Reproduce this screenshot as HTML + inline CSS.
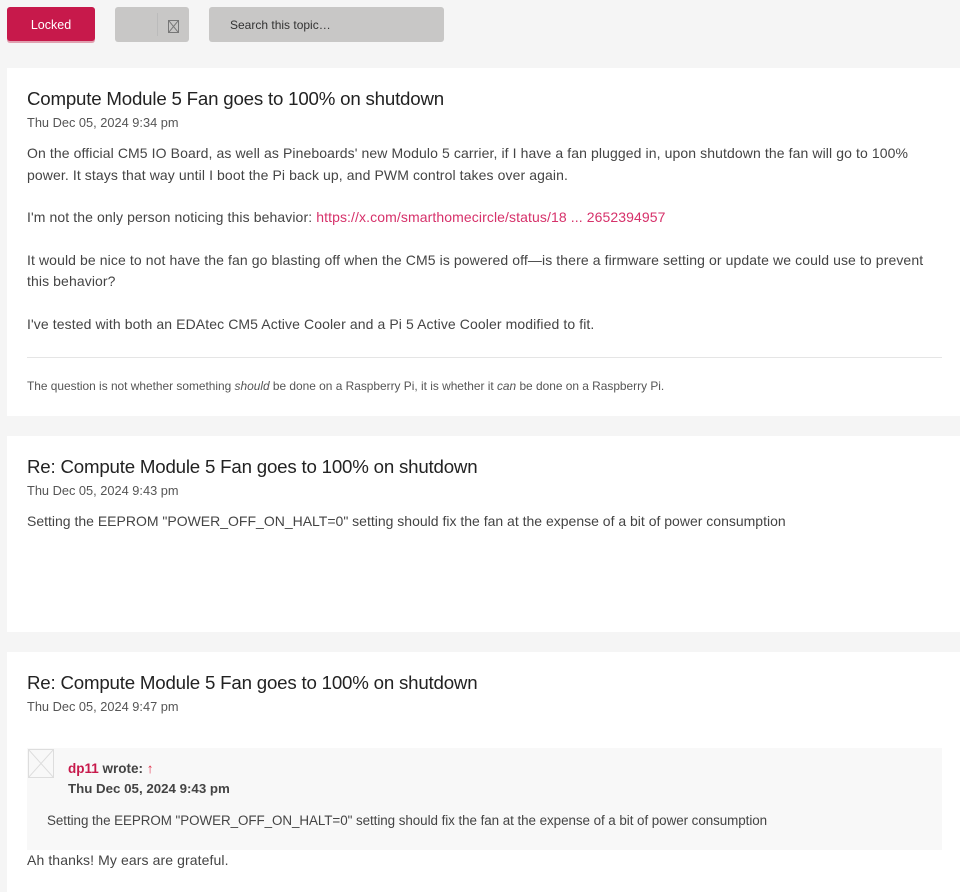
<!DOCTYPE html>
<html><head><style>
body{margin:0;background:#f5f5f5;font-family:"Liberation Sans",sans-serif;color:#444;width:960px;height:884px;overflow:hidden;position:relative}
.a{position:absolute}
.btn{border-radius:3px}
.card{position:absolute;left:7px;right:0;background:#fff}
h2{position:absolute;left:20px;margin:0;font-weight:normal;font-size:18.7px;color:#222;letter-spacing:-0.2px}
.d{position:absolute;left:20px;font-size:12.8px;color:#555}
p{margin:0;font-size:14px;line-height:21.5px;letter-spacing:0.1px}
a{color:#d6316a;text-decoration:none}
</style></head><body>
<div class="a btn" style="left:7px;top:7px;width:88px;height:34px;background:#c7194b;box-shadow:0 2px 0 #e0a0b0;color:#fff;font-size:12.5px;line-height:36px;text-align:center">Locked</div>
<div class="a btn" style="left:115px;top:7px;width:74px;height:35px;background:#c8c7c6"><div class="a" style="left:42px;top:6px;width:1px;height:23px;background:#bbb"></div><div class="a" style="left:53px;top:13px;width:9px;height:11px;border:1px solid #777"><svg width="9" height="11" style="display:block"><path d="M0 0L9 11M9 0L0 11" stroke="#777" stroke-width="1"/></svg></div></div>
<div class="a btn" style="left:209px;top:7px;width:235px;height:35px;background:#c8c7c6;font-size:12px;line-height:36px;color:#333;text-indent:21px">Search this topic…</div>

<div class="card" style="top:68px;height:348px">
<h2 style="top:20px">Compute Module 5 Fan goes to 100% on shutdown</h2>
<div class="d" style="top:47px">Thu Dec 05, 2024 9:34 pm</div>
<div class="a" style="left:20px;top:75px;width:920px">
<p>On the official CM5 IO Board, as well as Pineboards' new Modulo 5 carrier, if I have a fan plugged in, upon shutdown the fan will go to 100% power. It stays that way until I boot the Pi back up, and PWM control takes over again.</p>
<p style="margin-top:21px">I'm not the only person noticing this behavior: <a>https://x.com/smarthomecircle/status/18 ... 2652394957</a></p>
<p style="margin-top:21px">It would be nice to not have the fan go blasting off when the CM5 is powered off—is there a firmware setting or update we could use to prevent this behavior?</p>
<p style="margin-top:21px">I've tested with both an EDAtec CM5 Active Cooler and a Pi 5 Active Cooler modified to fit.</p>
</div>
<div class="a" style="left:20px;top:289px;width:915px;height:1px;background:#e5e5e5"></div>
<div class="a" style="left:20px;top:311px;font-size:11.9px;color:#555">The question is not whether something <i>should</i> be done on a Raspberry Pi, it is whether it <i>can</i> be done on a Raspberry Pi.</div>
</div>

<div class="card" style="top:436px;height:196px">
<h2 style="top:20px">Re: Compute Module 5 Fan goes to 100% on shutdown</h2>
<div class="d" style="top:47px">Thu Dec 05, 2024 9:43 pm</div>
<div class="a" style="left:20px;top:75px"><p style="letter-spacing:0">Setting the EEPROM "POWER_OFF_ON_HALT=0" setting should fix the fan at the expense of a bit of power consumption</p></div>
</div>

<div class="card" style="top:652px;height:240px">
<h2 style="top:20px">Re: Compute Module 5 Fan goes to 100% on shutdown</h2>
<div class="d" style="top:47px">Thu Dec 05, 2024 9:47 pm</div>
<div class="a" style="left:20px;top:96px;width:915px;height:102px;background:#f8f8f8">
<svg class="a" style="left:1px;top:1px" width="26" height="29"><rect x="0.5" y="0.5" width="25" height="28" fill="none" stroke="#ddd"/><path d="M0 0L26 29M26 0L0 29" stroke="#ddd"/></svg>
<div class="a" style="left:41px;top:13px;font-size:13.5px;font-weight:bold;color:#444"><span style="color:#c7194b">dp11</span> wrote: <span style="color:#e0304a;font-weight:normal">↑</span></div>
<div class="a" style="left:41px;top:33px;font-size:13.3px;font-weight:bold;color:#444">Thu Dec 05, 2024 9:43 pm</div>
<div class="a" style="left:20px;top:62px"><p style="font-size:13.4px;letter-spacing:-0.05px">Setting the EEPROM "POWER_OFF_ON_HALT=0" setting should fix the fan at the expense of a bit of power consumption</p></div>
</div>
<div class="a" style="left:20px;top:198px"><p>Ah thanks! My ears are grateful.</p></div>
</div>
</body></html>
